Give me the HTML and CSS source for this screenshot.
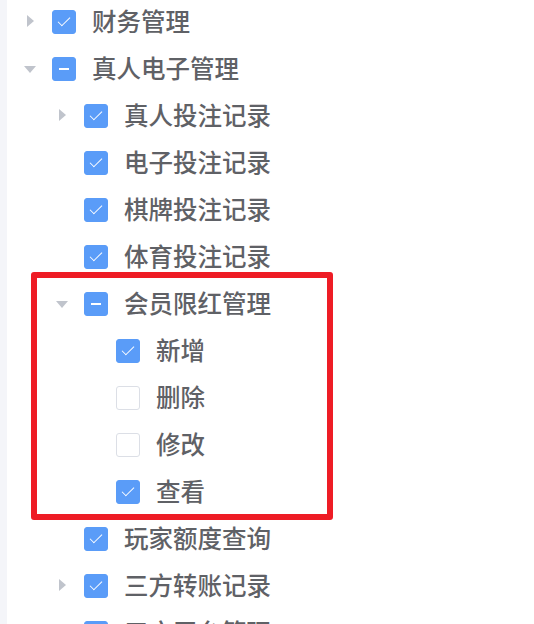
FILE: index.html
```html
<!doctype html>
<html lang="zh-CN">
  <head>
    <meta charset="UTF-8" />
    <meta name="viewport" content="width=device-width, initial-scale=1.0" />
    <title>权限设置</title>
    <link rel="stylesheet" href="styles.css">
  </head>
  <body>
    <div class="side-strip"></div>
    <ul class="tree">
      <li>
        <div class="tree-node">
          <span class="caret caret-right"></span>
          <span class="checkbox is-checked"></span>
          <span class="label">财务管理</span>
        </div>
      </li>
      <li>
        <div class="tree-node">
          <span class="caret caret-down"></span>
          <span class="checkbox is-half"></span>
          <span class="label">真人电子管理</span>
        </div>
        <ul class="tree-children">
          <li>
            <div class="tree-node">
              <span class="caret caret-right"></span>
              <span class="checkbox is-checked"></span>
              <span class="label">真人投注记录</span>
            </div>
          </li>
          <li>
            <div class="tree-node">
              <span class="caret"></span>
              <span class="checkbox is-checked"></span>
              <span class="label">电子投注记录</span>
            </div>
          </li>
          <li>
            <div class="tree-node">
              <span class="caret"></span>
              <span class="checkbox is-checked"></span>
              <span class="label">棋牌投注记录</span>
            </div>
          </li>
          <li>
            <div class="tree-node">
              <span class="caret"></span>
              <span class="checkbox is-checked"></span>
              <span class="label">体育投注记录</span>
            </div>
          </li>
          <li class="marked">
            <div class="tree-node">
              <span class="caret caret-down"></span>
              <span class="checkbox is-half"></span>
              <span class="label">会员限红管理</span>
            </div>
            <ul class="tree-children">
              <li>
                <div class="tree-node">
                  <span class="caret"></span>
                  <span class="checkbox is-checked"></span>
                  <span class="label">新增</span>
                </div>
              </li>
              <li>
                <div class="tree-node">
                  <span class="caret"></span>
                  <span class="checkbox"></span>
                  <span class="label">删除</span>
                </div>
              </li>
              <li>
                <div class="tree-node">
                  <span class="caret"></span>
                  <span class="checkbox"></span>
                  <span class="label">修改</span>
                </div>
              </li>
              <li>
                <div class="tree-node">
                  <span class="caret"></span>
                  <span class="checkbox is-checked"></span>
                  <span class="label">查看</span>
                </div>
              </li>
            </ul>
          </li>
          <li>
            <div class="tree-node">
              <span class="caret"></span>
              <span class="checkbox is-checked"></span>
              <span class="label">玩家额度查询</span>
            </div>
          </li>
          <li>
            <div class="tree-node">
              <span class="caret caret-right"></span>
              <span class="checkbox is-checked"></span>
              <span class="label">三方转账记录</span>
            </div>
          </li>
          <li>
            <div class="tree-node">
              <span class="caret caret-right"></span>
              <span class="checkbox is-checked"></span>
              <span class="label">三方平台管理</span>
            </div>
          </li>
        </ul>
      </li>
    </ul>
  </body>
</html>
```

FILE: styles.css
```css
html,
body {
  margin: 0;
  height: 100%;
  overflow: hidden;
}

body {
  display: flex;
  background-color: #fff;
  font-family: "Noto Sans CJK SC", "Noto Sans", sans-serif;
  color: #5f6166;
}

.side-strip {
  width: 7px;
  flex-shrink: 0;
  background-color: #f4f5f9;
}

.tree,
.tree-children {
  list-style: none;
  margin: 0;
  padding: 0;
}

.tree {
  flex: 1;
  margin-top: -2px;
}

.tree-children {
  padding-left: 32px;
}

.tree-node {
  display: flex;
  align-items: center;
  height: 47px;
  padding-left: 11px;
}

.caret {
  position: relative;
  width: 24px;
  height: 24px;
  margin-right: 10px;
  flex-shrink: 0;
}

/* css triangles for the expand icon */
.caret-right::before,
.caret-down::before {
  content: "";
  position: absolute;
  width: 0;
  height: 0;
}

.caret-right::before {
  left: 9px;
  top: 5px;
  border-top: 6px solid transparent;
  border-bottom: 6px solid transparent;
  border-left: 7px solid #c0c4cc;
}

.caret-down::before {
  left: 6px;
  top: 9px;
  border-left: 6px solid transparent;
  border-right: 6px solid transparent;
  border-top: 7px solid #c0c4cc;
}

.checkbox {
  position: relative;
  width: 24px;
  height: 24px;
  margin-right: 16px;
  flex-shrink: 0;
  box-sizing: border-box;
  border: 1px solid #dcdfe6;
  border-radius: 3px;
  background-color: #fff;
}

.checkbox.is-checked,
.checkbox.is-half {
  border-color: #5a9cf8;
  background-color: #5a9cf8;
}

.checkbox.is-checked::after {
  content: "";
  position: absolute;
  left: 8px;
  top: 3px;
  width: 5px;
  height: 11px;
  border: solid #fff;
  border-width: 0 1.5px 1.5px 0;
  transform: rotate(45deg);
}

.checkbox.is-half::after {
  content: "";
  position: absolute;
  left: 6px;
  right: 6px;
  top: 10px;
  height: 2.5px;
  background-color: #fff;
}

.label {
  font-size: 24.5px;
  font-weight: 500;
  line-height: 1;
  white-space: nowrap;
}

/* red annotation frame drawn over the highlighted node */
.marked {
  position: relative;
}

.marked::after {
  content: "";
  position: absolute;
  left: -8px;
  top: -8px;
  width: 302px;
  height: 248px;
  box-sizing: border-box;
  border: 6px solid #ee1c25;
  border-radius: 3px;
  pointer-events: none;
}
```
